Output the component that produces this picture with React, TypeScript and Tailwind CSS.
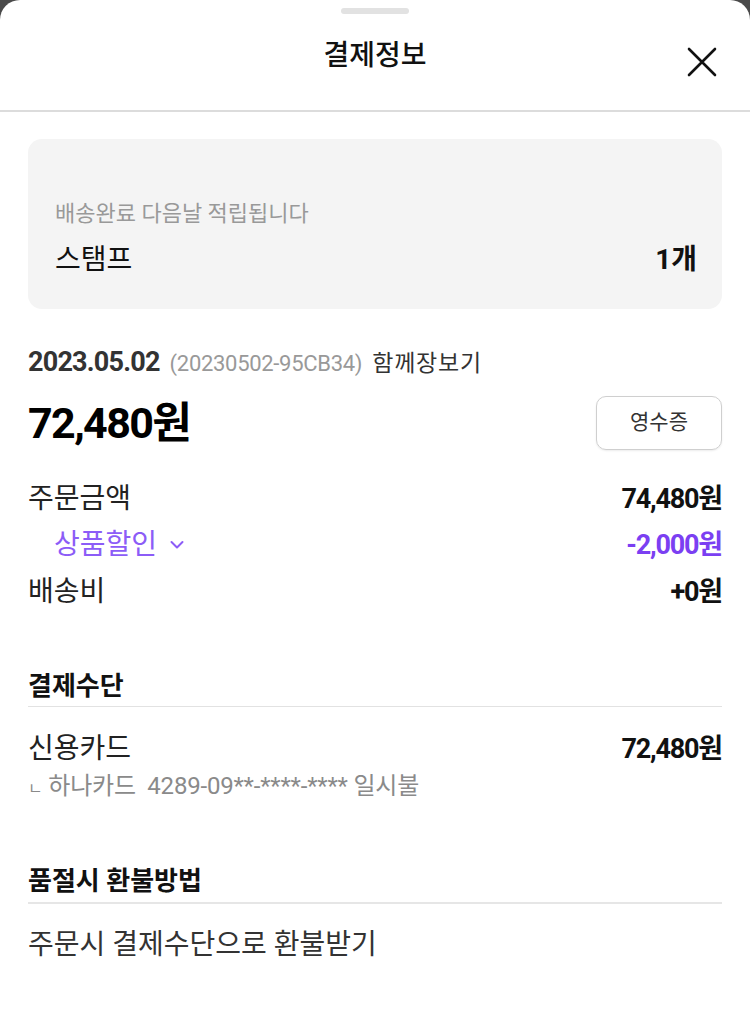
const font = { fontFamily: '"Roboto", "Noto Sans CJK KR", sans-serif' };

function Row({ label, value, className = "" }: { label: React.ReactNode; value: string; className?: string }) {
  return (
    <div className={`flex items-center justify-between leading-[34px] ${className}`}>
      <div className="text-[28px] text-[#222]">{label}</div>
      <div className="text-[27px] font-bold tracking-[-1.2px] text-[#111]">{value}</div>
    </div>
  );
}

export default function App() {
  return (
    <div className="min-h-screen bg-[#4a4a4a]" style={font}>
      <div className="flex min-h-[1034px] flex-col rounded-t-[20px] bg-white">
        {/* handle */}
        <div className="flex justify-center pt-[8px]">
          <div className="h-[6px] w-[68px] rounded-full bg-[#e2e2e2]" />
        </div>

        {/* header */}
        <div className="relative flex h-[98px] items-center justify-center border-b-2 border-[#dcdcdc] pb-[12px]">
          <h1 className="text-[28px] font-medium leading-[34px] text-[#111]">결제정보</h1>
          <button className="absolute right-[33px] top-[33px] text-[#111]">
            <svg width="30" height="30" viewBox="0 0 30 30" fill="none" stroke="currentColor" strokeWidth="2.6" strokeLinecap="round">
              <path d="M2 2L28 28M28 2L2 28" />
            </svg>
          </button>
        </div>

        <div className="px-[28px] pt-[27px]">
          {/* stamp card */}
          <div className="flex h-[170px] flex-col justify-end rounded-[14px] bg-[#f4f4f4] pl-[27px] pr-[25px] pb-[32px]">
            <p className="text-[22px] leading-[30px] text-[#999]">배송완료 다음날 적립됩니다</p>
            <div className="mt-[14px] flex items-center justify-between leading-[34px]">
              <span className="text-[28px] text-[#111]">스탬프</span>
              <span className="text-[28px] font-bold text-[#111]">1개</span>
            </div>
          </div>

          {/* order info */}
          <div className="mt-[37px] flex items-baseline gap-[10px] leading-[32px]">
            <span className="text-[27px] font-bold tracking-[-0.8px] text-[#333]">2023.05.02</span>
            <span className="text-[22px] tracking-[-0.3px] text-[#999]">(20230502-95CB34)</span>
            <span className="text-[23px] tracking-[0.8px] text-[#333]">함께장보기</span>
          </div>

          <div className="mt-[16px] flex items-center justify-between">
            <span className="text-[43px] font-bold leading-[54px] tracking-[-1.6px] text-[#000]">72,480원</span>
            <button className="h-[54px] w-[126px] rounded-[10px] border border-[#cfcfcf] text-[21px] text-[#333] shadow-[0_1px_2px_rgba(0,0,0,0.08)]">
              영수증
            </button>
          </div>

          <div className="mt-[32px] flex flex-col">
            <Row label="주문금액" value="74,480원" />
            <div className="mt-[12px] flex items-center justify-between leading-[34px]">
              <div className="flex items-center gap-[12px] pl-[26px] text-[28px] text-[#8c5cf7]">
                상품할인
                <svg width="16" height="12" viewBox="0 0 16 12" fill="none" stroke="currentColor" strokeWidth="2" strokeLinecap="round" strokeLinejoin="round">
                  <path d="M2.5 3L8 8.5L13.5 3" />
                </svg>
              </div>
              <div className="text-[27px] font-bold tracking-[-1.2px] text-[#7b3ff2]">-2,000원</div>
            </div>
            <Row label="배송비" value="+0원" className="mt-[13px]" />
          </div>

          {/* payment method */}
          <div className="mt-[61px] border-b border-[#e2e2e2] pb-[4px]">
            <h2 className="text-[26px] font-bold leading-[32px] text-[#111]">결제수단</h2>
          </div>
          <div className="mt-[25px]">
            <Row label="신용카드" value="72,480원" />
            <p className="mt-[5px] text-[24px] leading-[30px] tracking-[-0.2px] text-[#8a8a8a]">
              <span className="text-[16px]">ㄴ</span> 하나카드&nbsp;&nbsp;4289-09**-****-**** 일시불
            </p>
          </div>

          {/* refund */}
          <div className="mt-[61px] border-b-2 border-[#e6e6e6] pb-[5px]">
            <h2 className="text-[26px] font-bold leading-[32px] text-[#111]">품절시 환불방법</h2>
          </div>
          <p className="mt-[24px] text-[28px] leading-[34px] text-[#333]">주문시 결제수단으로 환불받기</p>
        </div>
      </div>
    </div>
  );
}
